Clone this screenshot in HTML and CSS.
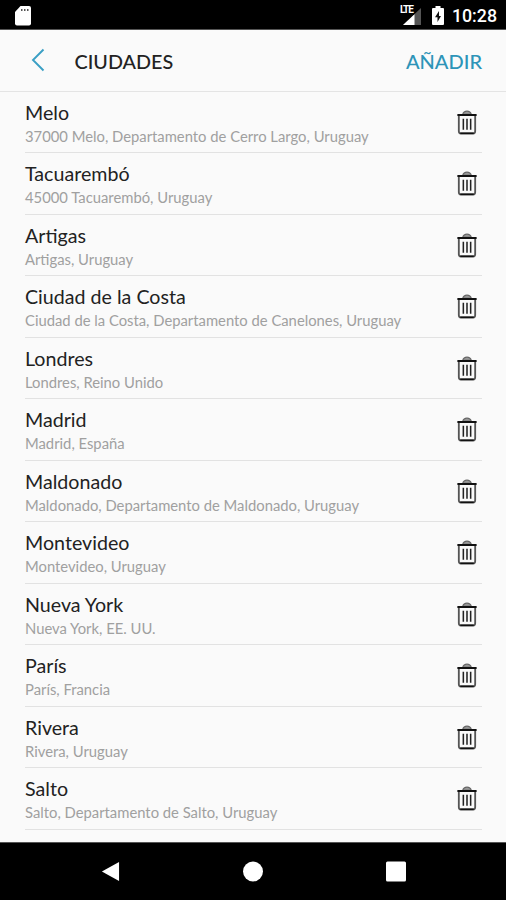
FILE: index.html
```html
<!DOCTYPE html>
<html lang="es">
<head>
<meta charset="utf-8">
<title>Ciudades</title>
<link rel="stylesheet" href="styles.css">
</head>
<body>
<svg class="defs" width="0" height="0" aria-hidden="true">
  <symbol id="trash" viewBox="0 0 22 26">
    <path d="M6.500 4.500Q7.500 1.200 11 1.200t4.500 3.300z" fill="#999" stroke="#666" stroke-width="1.200"/>
    <path d="M2.500 5.500v16.500q0 2.300 2 2.300h13q2 0 2-2.300v-16.500" fill="none" stroke="#555" stroke-width="1.900"/>
    <path d="M1 5.200h20M4 24.300h14" fill="none" stroke="#111" stroke-width="1.900"/>
    <path d="M7.200 9v11.500M11 9v11.500M14.800 9v11.500" fill="none" stroke="#222" stroke-width="1.600"/>
  </symbol>
</svg>
<div class="screen">
  <div class="status">
    <svg class="sd" viewBox="0 0 16 20"><path d="M5.500 0H14q2 0 2 2v15.500q0 2-2 2H2q-2 0-2-2V6z" fill="#fff"/><path d="M6 3h1.500v2H6zM9 3h1.500v2H9zM12 3h1.500v2H12z" fill="#555"/></svg>
    <div class="signal">
      <svg viewBox="0 0 24 20"><path d="M22 1v17H4z" fill="#555"/><path d="M15.500 7.300V18H4z" fill="#fff"/></svg>
      <span class="lte">LTE</span>
    </div>
    <svg class="battery" viewBox="0 0 12 19"><path d="M3.500 0h5v2H11q1 0 1 1v15q0 1-1 1H1q-1 0-1-1V3q0-1 1-1h2.500z" fill="#fff"/><path d="M7 5L3 11.200h2.500V16L9 9.900H7z" fill="#111"/></svg>
    <span class="time">10:28</span>
  </div>
  <header class="header">
    <svg class="back" viewBox="0 0 14 24"><path d="M12.500 1.500L2 12l10.500 10.500" fill="none" stroke="#3a9fc4" stroke-width="1.900"/></svg>
    <h1>CIUDADES</h1>
    <span class="add">AÑADIR</span>
  </header>
  <ul class="list">
    <li><div><h2>Melo</h2><p>37000 Melo, Departamento de Cerro Largo, Uruguay</p></div><svg class="trash"><use href="#trash"/></svg></li>
    <li><div><h2>Tacuarembó</h2><p>45000 Tacuarembó, Uruguay</p></div><svg class="trash"><use href="#trash"/></svg></li>
    <li><div><h2>Artigas</h2><p>Artigas, Uruguay</p></div><svg class="trash"><use href="#trash"/></svg></li>
    <li><div><h2>Ciudad de la Costa</h2><p>Ciudad de la Costa, Departamento de Canelones, Uruguay</p></div><svg class="trash"><use href="#trash"/></svg></li>
    <li><div><h2>Londres</h2><p>Londres, Reino Unido</p></div><svg class="trash"><use href="#trash"/></svg></li>
    <li><div><h2>Madrid</h2><p>Madrid, España</p></div><svg class="trash"><use href="#trash"/></svg></li>
    <li><div><h2>Maldonado</h2><p>Maldonado, Departamento de Maldonado, Uruguay</p></div><svg class="trash"><use href="#trash"/></svg></li>
    <li><div><h2>Montevideo</h2><p>Montevideo, Uruguay</p></div><svg class="trash"><use href="#trash"/></svg></li>
    <li><div><h2>Nueva York</h2><p>Nueva York, EE. UU.</p></div><svg class="trash"><use href="#trash"/></svg></li>
    <li><div><h2>París</h2><p>París, Francia</p></div><svg class="trash"><use href="#trash"/></svg></li>
    <li><div><h2>Rivera</h2><p>Rivera, Uruguay</p></div><svg class="trash"><use href="#trash"/></svg></li>
    <li><div><h2>Salto</h2><p>Salto, Departamento de Salto, Uruguay</p></div><svg class="trash"><use href="#trash"/></svg></li>
  </ul>
  <nav class="nav">
    <svg viewBox="0 0 20 22"><path d="M19.500 1v20L1.500 11z" fill="#fff"/></svg>
    <svg viewBox="0 0 22 22"><circle cx="11" cy="11" r="11" fill="#fff"/></svg>
    <svg viewBox="0 0 20 20"><rect width="20" height="20" rx="1.500" fill="#fff"/></svg>
  </nav>
</div>
</body>
</html>
```
FILE: styles.css
```css
* { box-sizing: border-box; margin: 0; padding: 0; }
body { font-family: Lato, sans-serif; background: #fafafa; }
.defs { display: none; }
.screen { width: 506px; height: 900px; display: flex; flex-direction: column; overflow: hidden; }
.status { height: 30px; flex: none; background: #000; border-bottom: 1px solid #555; display: flex; align-items: center; padding: 2px 9px 0 15px; color: #fff; }
.sd { width: 16px; height: 20px; margin-right: auto; }
.signal { position: relative; width: 24px; height: 20px; margin-right: 9px; }
.signal svg { display: block; width: 24px; height: 20px; margin-top: 1px; }
.lte { position: absolute; left: 1px; top: -1px; font: bold 10px/10px "Roboto", sans-serif; letter-spacing: -1.1px; background: #000; padding-right: 1px; }
.battery { width: 12px; height: 19px; margin-right: 8px; }
.time { font: 500 17.8px/20px Roboto, sans-serif; }
.header { height: 61.5px; flex: none; border-bottom: 1px solid #e4e4e4; display: flex; align-items: center; padding: 0 24px 0 31px; }
.back { width: 14px; height: 24px; margin-right: 29.5px; }
.header h1 { font-size: 19.8px; font-weight: 500; line-height: 24px; color: #222; margin-right: auto; padding-top: 2px; }
.add { font-size: 20px; font-weight: 500; line-height: 24px; color: #2d94b8; padding-top: 2px; }
.list { list-style: none; flex: 1; margin: 0 24px 0 25px; }
.list li { height: 61.54px; border-bottom: 1px solid #e2e2e2; display: flex; justify-content: space-between; padding: 8px 4px 0 0; }
.list h2 { font-size: 19.65px; font-weight: 400; line-height: 26px; color: #222; white-space: nowrap; }
.list p { font-size: 14.8px; line-height: 20px; color: #a0a0a0; white-space: nowrap; }
.trash { width: 22px; height: 25px; margin-top: 10px; }
.nav { height: 58px; flex: none; background: #000; border-top: 1px solid #555; display: flex; align-items: center; justify-content: space-between; padding: 0 100px 1px 100px; }
.nav svg { width: 20px; height: 21px; }
```
